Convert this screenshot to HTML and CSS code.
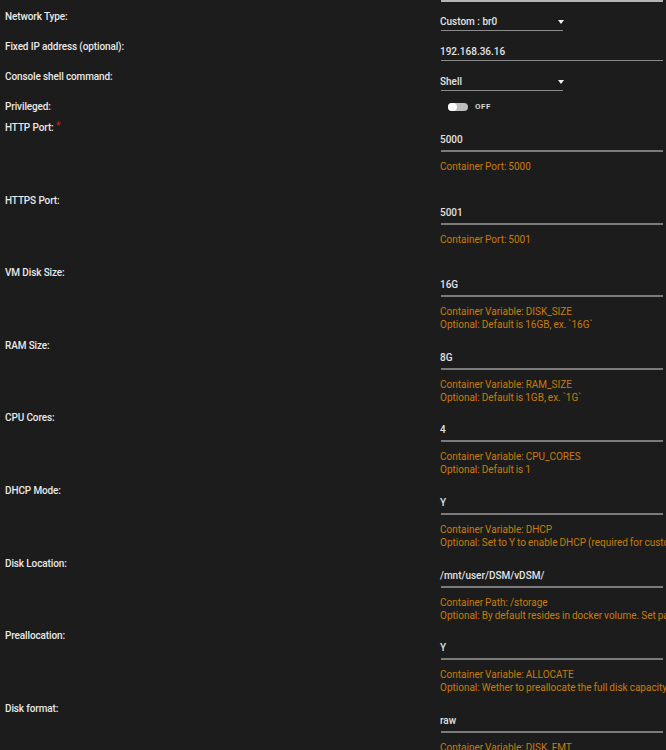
FILE: index.html
```html
<!DOCTYPE html>
<html lang="en">
<head>
    <meta charset="UTF-8">
    <meta name="viewport" content="width=device-width, initial-scale=1.0">
    <title>Container settings</title>
    <link rel="stylesheet" href="styles.css">
</head>
<body>
    <div class="form">
        <div class="top-line"></div>

        <div class="row small">
            <div class="label">Network Type:</div>
            <div class="field"><div class="select">Custom : br0<span class="arrow"></span></div></div>
        </div>
        <div class="row small">
            <div class="label">Fixed IP address (optional):</div>
            <div class="field"><div class="input">192.168.36.16</div></div>
        </div>
        <div class="row small">
            <div class="label">Console shell command:</div>
            <div class="field"><div class="select">Shell<span class="arrow"></span></div></div>
        </div>
        <div class="row toggle-row">
            <div class="label">Privileged:</div>
            <div class="field">
                <div class="switch"><span class="track"><span class="knob"></span></span><span class="switch-text">OFF</span></div>
            </div>
        </div>

        <div class="row big">
            <div class="label">HTTP Port: <span class="required">*</span></div>
            <div class="field">
                <div class="input">5000</div>
                <div class="desc">Container Port: 5000</div>
            </div>
        </div>
        <div class="row big">
            <div class="label">HTTPS Port:</div>
            <div class="field">
                <div class="input">5001</div>
                <div class="desc">Container Port: 5001</div>
            </div>
        </div>
        <div class="row big">
            <div class="label">VM Disk Size:</div>
            <div class="field">
                <div class="input">16G</div>
                <div class="desc">Container Variable: DISK_SIZE<br>Optional: Default is 16GB, ex. `16G`</div>
            </div>
        </div>
        <div class="row big">
            <div class="label">RAM Size:</div>
            <div class="field">
                <div class="input">8G</div>
                <div class="desc">Container Variable: RAM_SIZE<br>Optional: Default is 1GB, ex. `1G`</div>
            </div>
        </div>
        <div class="row big">
            <div class="label">CPU Cores:</div>
            <div class="field">
                <div class="input">4</div>
                <div class="desc">Container Variable: CPU_CORES<br>Optional: Default is 1</div>
            </div>
        </div>
        <div class="row big">
            <div class="label">DHCP Mode:</div>
            <div class="field">
                <div class="input">Y</div>
                <div class="desc">Container Variable: DHCP<br>Optional: Set to Y to enable DHCP (required for custom networks with macvlan)</div>
            </div>
        </div>
        <div class="row big">
            <div class="label">Disk Location:</div>
            <div class="field">
                <div class="input">/mnt/user/DSM/vDSM/</div>
                <div class="desc">Container Path: /storage<br>Optional: By default resides in docker volume. Set path to store disks elsewhere</div>
            </div>
        </div>
        <div class="row big">
            <div class="label">Preallocation:</div>
            <div class="field">
                <div class="input">Y</div>
                <div class="desc">Container Variable: ALLOCATE<br>Optional: Wether to preallocate the full disk capacity</div>
            </div>
        </div>
        <div class="row big">
            <div class="label">Disk format:</div>
            <div class="field">
                <div class="input">raw</div>
                <div class="desc">Container Variable: DISK_FMT<br>Optional: Disk format, raw or qcow2</div>
            </div>
        </div>
    </div>
</body>
</html>
```

FILE: styles.css
```css
html, body {
    margin: 0;
    padding: 0;
    background: #1c1c1c;
    overflow: hidden;
}
body {
    font-family: Roboto, "Liberation Sans", sans-serif;
    font-size: 10px;
    color: #e8e8e8;
}
.form {
    padding-left: 5px;
}
.top-line {
    margin-left: 436px;
    width: 222px;
    height: 2px;
    background: #b5b5b5;
}
.row {
    display: grid;
    grid-template-columns: 435px 223px;
    box-sizing: border-box;
}
.label {
    line-height: 14px;
    font-weight: 500;
    letter-spacing: -0.12px;
    white-space: nowrap;
}
.required {
    color: #d01818;
    position: relative;
    top: -2px;
}
.input, .select {
    line-height: 14px;
    height: 14px;
    padding-top: 1px;
    padding-bottom: 3px;
    border-bottom: 2px solid #7b7b7b;
    color: #e2e2e2;
    font-weight: 500;
    margin-left: 1px;
    text-indent: -1px;
    white-space: nowrap;
}
.select {
    width: 122px;
    position: relative;
    border-bottom-color: #747474;
}
.arrow {
    position: absolute;
    right: -1px;
    top: 7px;
    border-left: 3px solid transparent;
    border-right: 3px solid transparent;
    border-top: 4px solid #f0f0f0;
}
.small {
    height: 30px;
}
.small .label {
    padding-top: 8px;
}
.small .field {
    padding-top: 11px;
}
.small .input, .small .select {
    height: 13px;
    padding-top: 2px;
    padding-bottom: 2px;
    border-bottom-width: 1px;
    border-bottom-color: #8a8a8a;
}
.toggle-row {
    height: 28px;
}
.toggle-row .label {
    padding-top: 8px;
}
.toggle-row .field {
    padding-top: 11px;
}
.switch {
    display: flex;
    align-items: center;
    gap: 7px;
    margin-left: 8px;
}
.track {
    display: block;
    width: 20px;
    height: 8px;
    border-radius: 4px;
    background: #bdbdbd;
    position: relative;
}
.knob {
    position: absolute;
    left: 0;
    top: 0;
    width: 9px;
    height: 8px;
    border-radius: 4px;
    background: #fafafa;
}
.switch-text {
    font-size: 8px;
    font-weight: 700;
    letter-spacing: 0.5px;
    color: #d8d8d8;
    line-height: 8px;
}
.big {
    height: 72.6px;
}
.big .label {
    padding-top: 1px;
}
.big .field {
    padding-top: 12px;
}
.desc {
    margin-top: 8px;
    line-height: 13px;
    color: #c77d0c;
    word-spacing: -0.5px;
    white-space: nowrap;
}
```
